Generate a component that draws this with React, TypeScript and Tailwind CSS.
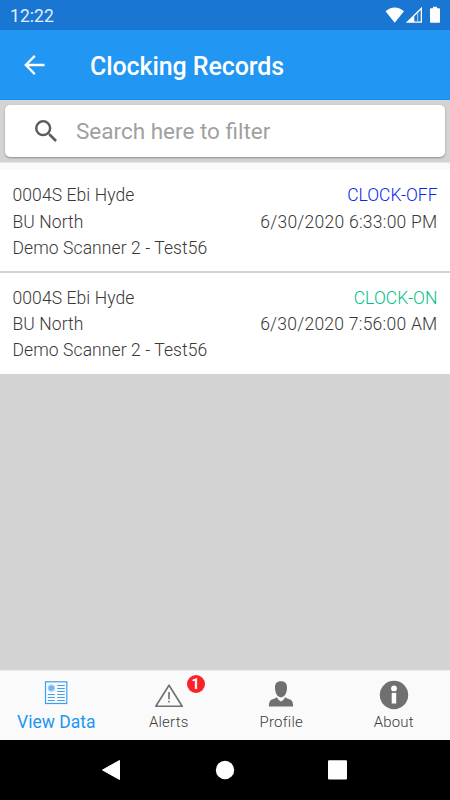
import React from "react";

type ClockRecord = { status: string; color: string; tracking: string; time: string };

const records: ClockRecord[] = [
  { status: "CLOCK-OFF", color: "text-[#0a26f0]", tracking: "tracking-[0px]", time: "6/30/2020 6:33:00 PM" },
  { status: "CLOCK-ON", color: "text-[#00c288]", tracking: "tracking-[0.1px]", time: "6/30/2020 7:56:00 AM" },
];

function StatusBar() {
  return (
    <div className="flex h-[30px] items-center justify-between bg-[#1976d2] pl-[10px] pr-[10px] text-white">
      <span className="pt-[3px] text-[17.5px] leading-none tracking-[0.05px] text-[#e3eefa]">12:22</span>
      <svg width="56" height="20" viewBox="384 5 56 20" fill="#fff">
        <path d="M385.5 11.3C390.8 6.1 398.7 6.1 404 11.3L394.7 22.7Z" />
        <path fillRule="evenodd" d="M405.8 22.7L422 6.8V22.7ZM414.3 21.4H420.7V9.9L414.3 16.2Z" />
        <path d="M417 13.6L418.2 12.4V21.5H417Z" opacity=".55" />
        <path d="M430.5 8.3H433V6.8H437V8.3H439.2Q440 8.3 440 9.1V22Q440 22.8 439.2 22.8H431Q430 22.8 430 22V9Q430 8.3 430.5 8.3Z" />
      </svg>
    </div>
  );
}

function RecordRow({ record }: { record: ClockRecord }) {
  return (
    <div className="flex h-[101px] justify-between bg-white pl-[12.5px] pr-[12.5px] pt-[12.3px] text-[17.5px] font-light leading-[26.25px] text-[#383838]">
      <div className="tracking-[0.09px]">
        <div>0004S Ebi Hyde</div>
        <div>BU North</div>
        <div>Demo Scanner 2 - Test56</div>
      </div>
      <div className="text-right">
        <div className={`${record.color} ${record.tracking}`}>{record.status}</div>
        <div className="tracking-[0.25px]">{record.time}</div>
      </div>
    </div>
  );
}

function DataIcon() {
  return (
    <svg width="24" height="24" viewBox="0 0 24 24" fill="none" stroke="#3fa0f0">
      <rect x="1.5" y="0.8" width="21.3" height="21.7" strokeWidth="1.2" />
      <circle cx="7.4" cy="7.1" r="3.7" fill="#2196f3" opacity=".45" stroke="none" />
      <circle cx="7.4" cy="7.1" r="1.5" strokeWidth="1" />
      <path d="M13.2 4.5H20.8M13.2 7.5H20.8M13.2 10.5H20.8M3.8 13.5H10.8M13.2 13.5H20.8M3.8 16.5H10.8M13.2 16.5H20.8M3.8 19.5H10.8M13.2 19.5H20.8" strokeWidth="1.1" />
    </svg>
  );
}

function AlertIcon() {
  return (
    <svg width="30" height="24" viewBox="0 0 30 24" fill="none" stroke="#707070">
      <path d="M15 1.2L28.2 22.2H1.8Z" strokeWidth="1.6" strokeLinejoin="round" />
      <path d="M15 8V15.3M15 16.8V18.5" strokeWidth="1.6" />
    </svg>
  );
}

function ProfileIcon() {
  return (
    <svg width="26" height="26" viewBox="0 0 26 26" fill="#707070">
      <path d="M13 .3C17.4.3 19.2 3 19 7.1C18.8 12.5 16.5 16.4 13 16.4S7.2 12.5 7 7.1C6.8 3 8.6.3 13 .3Z" />
      <path d="M8.9 16.2Q10 18.9 13 20.5Q16 18.9 17.1 16.2C18.4 17.5 21.3 17.8 23 18.9C24.6 20 25.1 22.2 25.1 25.5H.9C.9 22.2 1.4 20 3 18.9C4.7 17.8 7.6 17.5 8.9 16.2Z" />
    </svg>
  );
}

function AboutIcon() {
  return (
    <svg width="30" height="30" viewBox="0 0 30 30">
      <circle cx="15" cy="15" r="14.2" fill="#707070" />
      <circle cx="15" cy="8.4" r="2.9" fill="#fff" />
      <path d="M12.7 12.9H17.2V23.5H12.7Z" fill="#fff" />
    </svg>
  );
}

function TabBar() {
  return (
    <nav className="flex h-[70.5px] shrink-0 border-t border-[#eee] bg-[#fafafa] text-[#3c3c3c]">
      <div className="flex flex-1 flex-col items-center">
        <div className="flex h-[38px] items-start pt-[10px]"><DataIcon /></div>
        <span className="text-[17.5px] leading-[26px] text-[#2196f3]">View Data</span>
      </div>
      <div className="relative flex flex-1 flex-col items-center">
        <div className="flex h-[39px] items-start pt-[13px]"><AlertIcon /></div>
        <span className="text-[15px] font-light leading-[24px] tracking-[0.2px]">Alerts</span>
        <span className="absolute left-[74px] top-[4px] flex h-[18px] w-[18px] items-center justify-center rounded-full bg-[#fc2028] text-[14px] font-bold leading-none text-white">1</span>
      </div>
      <div className="flex flex-1 flex-col items-center">
        <div className="flex h-[39px] items-start pt-[10px]"><ProfileIcon /></div>
        <span className="text-[15px] font-light leading-[24px] tracking-[0.2px]">Profile</span>
      </div>
      <div className="flex flex-1 flex-col items-center">
        <div className="flex h-[39px] items-start pt-[9px]"><AboutIcon /></div>
        <span className="text-[15px] font-light leading-[24px] tracking-[0.2px]">About</span>
      </div>
    </nav>
  );
}

export default function App() {
  return (
    <div className="flex h-[800px] w-[450px] flex-col overflow-hidden bg-[#d3d3d3] font-['Roboto',sans-serif]">
      <StatusBar />
      <header className="flex h-[70px] items-center border-b border-[#148ef0] bg-[#2196f3] pl-[24px] text-white">
        <svg width="21" height="20" viewBox="0 0 21 20" fill="none" stroke="#fff" strokeWidth="2.3">
          <path d="M20.5 10H2M10.8 .9L1.8 10L10.8 19.1" />
        </svg>
        <h1 className="ml-[45px] pt-[3px] text-[25px] font-medium leading-none tracking-[-0.09px]">Clocking Records</h1>
      </header>
      <div className="h-[62px] px-[5px] pt-[5px]">
        <div className="flex h-[52px] items-center rounded-[5px] bg-white pl-[30px] shadow-[0_1px_2px_rgba(0,0,0,0.35)]">
          <svg width="22" height="22" viewBox="3 3 17.5 17.5" fill="#5c5c5c">
            <path d="M15.5 14h-.79l-.28-.27A6.47 6.47 0 0 0 16 9.5 6.5 6.5 0 1 0 9.5 16c1.61 0 3.09-.59 4.23-1.57l.27.28v.79l5 4.99L20.49 19zm-6 0C7.01 14 5 11.99 5 9.5S7.01 5 9.5 5 14 7.01 14 9.5 11.99 14 9.5 14" />
          </svg>
          <span className="ml-[19px] pt-px text-[22.5px] font-normal leading-none text-[#a0a0a0]">Search here to filter</span>
        </div>
      </div>
      <div className="h-[8px] border-t border-[#e5e5e5] bg-[#fafafa]" />
      <RecordRow record={records[0]} />
      <div className="h-[1.5px] shrink-0 bg-[#d3d3d3]" />
      <RecordRow record={records[1]} />
      <main className="flex-1" />
      <TabBar />
      <div className="h-[60px] shrink-0 bg-black">
        <svg width="450" height="60" viewBox="0 0 450 60" fill="#fff">
          <path d="M102.5 30L119.5 20.5V39.5Z" stroke="#fff" strokeWidth="1" strokeLinejoin="round" />
          <circle cx="225" cy="30" r="9.2" />
          <rect x="328" y="20.3" width="19" height="19.3" rx="1" />
        </svg>
      </div>
    </div>
  );
}
